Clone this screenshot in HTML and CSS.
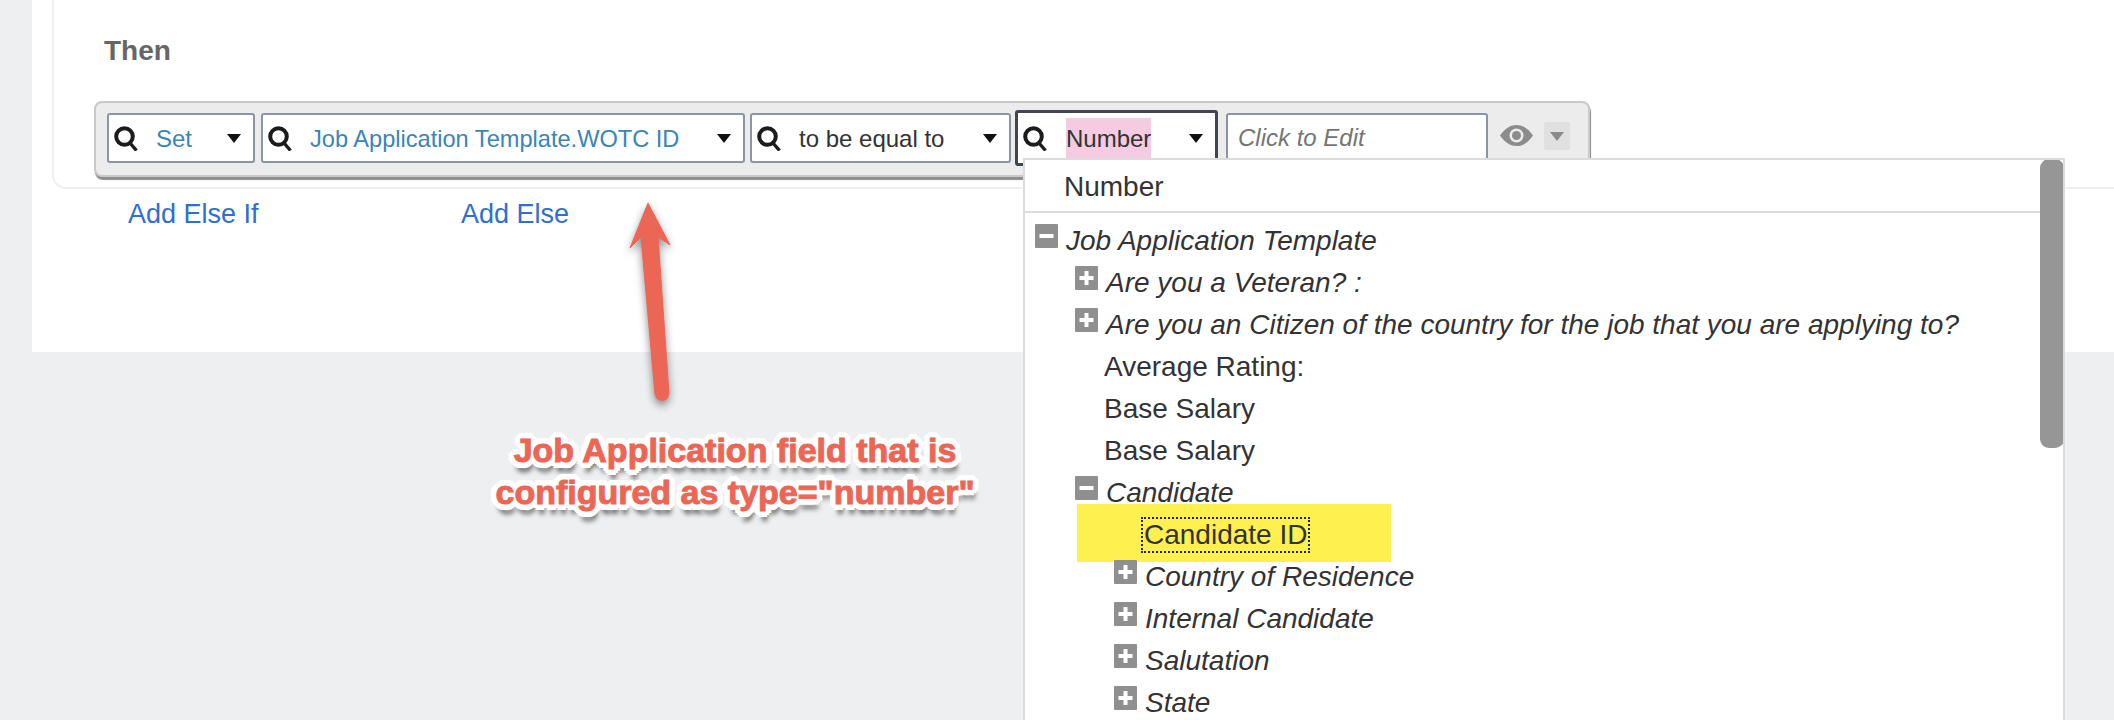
FILE: index.html
```html
<!DOCTYPE html>
<html lang="en">
<head>
<meta charset="utf-8">
<title>Rule editor</title>
<link rel="stylesheet" href="styles.css">
</head>
<body>
<svg class="defs" width="0" height="0" aria-hidden="true">
  <symbol id="search" viewBox="0 0 24 25">
    <circle cx="10.500" cy="10.500" r="8.300" fill="none" stroke="#1c1c1c" stroke-width="4"/>
    <path d="M16 17 L22.500 24.500" fill="none" stroke="#1c1c1c" stroke-width="3.400"/>
  </symbol>
  <symbol id="plus" viewBox="0 0 23 24">
    <rect width="23" height="24" rx="1" fill="#8f8f8f"/>
    <path d="M11.500 5v14M4.500 12h14" stroke="#fff" stroke-width="4"/>
  </symbol>
  <symbol id="minus" viewBox="0 0 23 24">
    <rect width="23" height="24" rx="1" fill="#8f8f8f"/>
    <path d="M4.500 12h14" stroke="#fff" stroke-width="4"/>
  </symbol>
</svg>

<main class="panel">
  <section class="card">
    <h2 class="then">Then</h2>
    <div class="bar">
      <div class="field f-set"><svg class="mag"><use href="#search"/></svg><span class="val link">Set</span><i class="caret"></i></div>
      <div class="field f-path"><svg class="mag"><use href="#search"/></svg><span class="val link">Job Application Template.WOTC ID</span><i class="caret"></i></div>
      <div class="field f-op"><svg class="mag"><use href="#search"/></svg><span class="val">to be equal to</span><i class="caret"></i></div>
      <div class="field f-num"><svg class="mag"><use href="#search"/></svg><span class="val pink">Number</span><i class="caret"></i></div>
      <div class="field f-edit"><span class="placeholder">Click to Edit</span></div>
      <svg class="eye" viewBox="0 0 33 21"><path d="M0 10.500C5 3 11 0 16.500 0S28 3 33 10.500C28 18 22 21 16.500 21S5 18 0 10.500Z" fill="#8c8c8c"/><circle cx="16.500" cy="10.500" r="7" fill="#ececec"/><circle cx="16.500" cy="10.500" r="4.500" fill="#8c8c8c"/></svg>
      <div class="more"><i class="caret grey"></i></div>
    </div>
  </section>
  <nav class="links"><a class="add-if">Add Else If</a><a>Add Else</a></nav>
</main>

<div class="dropdown">
  <div class="search-row">Number</div>
  <div class="tree">
    <div class="row l0 em"><svg class="tog"><use href="#minus"/></svg>Job Application Template</div>
    <div class="row l1 em"><svg class="tog"><use href="#plus"/></svg>Are you a Veteran? :</div>
    <div class="row l1 em"><svg class="tog"><use href="#plus"/></svg>Are you an Citizen of the country for the job that you are applying to?</div>
    <div class="row l1leaf">Average Rating:</div>
    <div class="row l1leaf">Base Salary</div>
    <div class="row l1leaf">Base Salary</div>
    <div class="row l1 em"><svg class="tog"><use href="#minus"/></svg>Candidate</div>
    <div class="row l2leaf hit"><span class="focus">Candidate ID</span></div>
    <div class="row l2 em"><svg class="tog"><use href="#plus"/></svg>Country of Residence</div>
    <div class="row l2 em"><svg class="tog"><use href="#plus"/></svg>Internal Candidate</div>
    <div class="row l2 em"><svg class="tog"><use href="#plus"/></svg>Salutation</div>
    <div class="row l2 em"><svg class="tog"><use href="#plus"/></svg>State</div>
  </div>
  <div class="thumb"></div>
</div>

<svg class="arrow" viewBox="0 0 70 215">
  <path d="M28 8 L50 50 L38 42 L49 199 L35 199 L21 42 L10 53 Z" fill="#ec6656" stroke="#ec6656" stroke-width="1" stroke-linejoin="round"/>
  <circle cx="42" cy="199" r="7" fill="#ec6656"/>
</svg>
<p class="note">Job Application field that is<br>configured as type="number"</p>
</body>
</html>
```
FILE: styles.css
```css
* { box-sizing: border-box; }
html, body { margin: 0; height: 720px; overflow: hidden; }
body {
  position: relative;
  background: #eeeff1;
  font-family: "Liberation Sans", Arial, sans-serif;
  font-size: 24px;
  color: #333;
}
.defs { position: absolute; }

.panel { margin-left: 32px; height: 352px; background: #fff; overflow: hidden; }
.card {
  margin: -2px 0 0 20px;
  height: 191px;
  padding: 35px 0 0 40px;
  border: 2px solid #efefef;
  border-right: 0;
  border-radius: 0 0 0 14px;
}
.then { margin: 0 0 0 10px; font-size: 28px; line-height: 32px; font-weight: bold; color: #666; }

.bar {
  display: flex;
  align-items: center;
  width: 1496px;
  height: 76px;
  margin-top: 34px;
  padding: 0 0 2px 11px;
  background: #ececec;
  border: 2px solid #c9c9c9;
  border-radius: 8px;
  box-shadow: 1px 3px 1px #8d8d8d;
}
.field {
  display: flex;
  align-items: center;
  flex: none;
  height: 50px;
  padding-left: 5px;
  background: #fff;
  border: 2px solid #8a94a3;
  border-radius: 3px;
}
.f-set { width: 148px; margin-right: 6px; }
.f-path { width: 484px; margin-right: 5px; }
.f-op { width: 261px; margin-right: 4px; }
.f-num { width: 203px; height: 56px; margin-right: 8px; border: 3px solid #3f4650; }
.f-edit { width: 262px; margin-right: 12px; padding-left: 10px; }
.mag { width: 24px; height: 25px; flex: none; }
.val { margin-left: 18px; padding-top: 2px; white-space: nowrap; }
.f-path .val { font-size: 23.600px; }
.f-num .val { margin-left: 19px; }
.link { color: #3a85b8; }
.pink { display: flex; align-items: center; height: 40px; background: #f4cbe0; }
.caret {
  margin-left: auto;
  margin-right: 12px;
  width: 0;
  height: 0;
  border: 7px solid transparent;
  border-top: 9px solid #111;
  border-bottom: 0;
}
.placeholder { font-style: italic; color: #757575; }
.eye { width: 33px; height: 21px; flex: none; margin: -6px 11px 0 0; }
.more {
  display: flex;
  align-items: center;
  justify-content: center;
  flex: none;
  width: 26px;
  height: 28px;
  margin-top: -4px;
  background: #e0e0e0;
  border-radius: 3px;
}
.caret.grey { margin: 0; border-top-color: #8a8a8a; }

.links { display: flex; margin-top: 9px; padding-left: 96px; line-height: 32px; }
.links a { color: #2f6fd0; font-size: 27px; }
.add-if { width: 333px; }

.dropdown {
  position: absolute;
  left: 1023px;
  top: 158px;
  width: 1042px;
  height: 570px;
  overflow: hidden;
  background: #fff;
  border: 2px solid #dcdcdc;
  font-size: 28px;
}
.search-row {
  height: 53px;
  padding-left: 39px;
  line-height: 54px;
  border-bottom: 2px solid #dcdcdc;
}
.tree { padding-top: 6px; }
.row {
  position: relative;
  display: flex;
  align-items: center;
  height: 42px;
  padding-top: 1px;
  white-space: nowrap;
}
.em { font-style: italic; }
.tog { width: 23px; height: 24px; flex: none; margin: -9px 8px 0 0; }
.l0 { padding-left: 10px; }
.l1 { padding-left: 50px; }
.l1leaf { padding-left: 79px; }
.l2 { padding-left: 89px; }
.l2leaf { padding-left: 119px; }
.hit::before {
  content: "";
  position: absolute;
  left: 52px;
  top: -9px;
  width: 314px;
  height: 58px;
  background: #fdf04f;
}
.focus {
  position: relative;
  padding: 1px;
  margin-left: -3px;
  border: 2px dotted #222;
  line-height: 30px;
}
.thumb {
  position: absolute;
  right: -1px;
  top: -1px;
  width: 24px;
  height: 289px;
  background: #969696;
  border-radius: 9px;
}

.arrow {
  position: absolute;
  left: 620px;
  top: 195px;
  width: 70px;
  height: 215px;
  filter: drop-shadow(0 4px 4px rgba(0, 0, 0, .45));
}
.note {
  position: absolute;
  left: 435px;
  top: 429px;
  width: 600px;
  margin: 0;
  text-align: center;
  font-size: 34px;
  line-height: 42px;
  font-weight: bold;
  color: #ec6656;
  -webkit-text-stroke: 1px #ec6656;
  text-shadow:
    5px 0 0 #fff, -5px 0 0 #fff, 0 5px 0 #fff, 0 -5px 0 #fff,
    4px 4px 0 #fff, -4px 4px 0 #fff, 4px -4px 0 #fff, -4px -4px 0 #fff,
    6px 2px 0 #fff, -6px 2px 0 #fff, 6px -2px 0 #fff, -6px -2px 0 #fff,
    2px 6px 0 #fff, -2px 6px 0 #fff, 2px -6px 0 #fff, -2px -6px 0 #fff,
    2px 10px 5px rgba(0, 0, 0, .65);
}
```
